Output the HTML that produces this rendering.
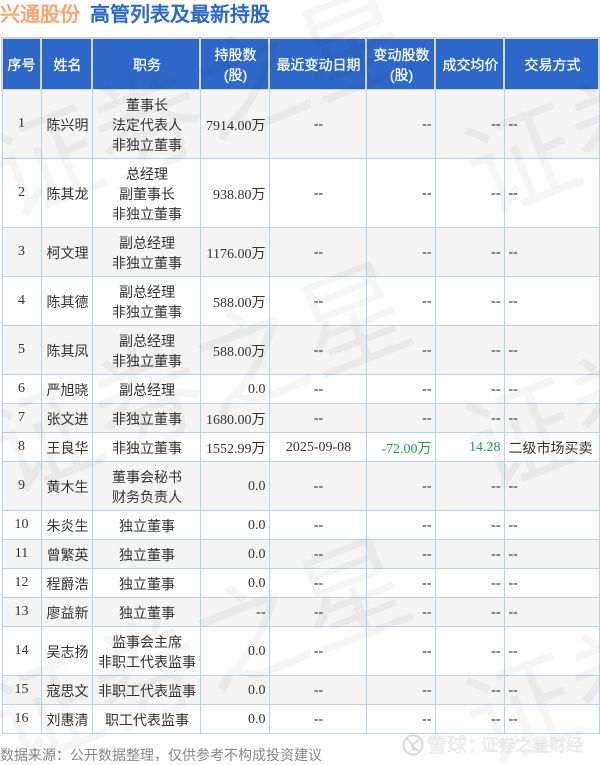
<!DOCTYPE html>
<html lang="zh"><head><meta charset="utf-8"><title>高管列表及最新持股</title>
<style>
html,body{margin:0;padding:0;background:#fff}
body{position:relative;width:600px;height:764px;overflow:hidden;font-family:"Liberation Serif","WenQuanYi Zen Hei",serif;color:#333}
.t{position:absolute;top:1px;font:bold 20px/28px "Liberation Sans","WenQuanYi Zen Hei",sans-serif}
table{position:absolute;left:1px;top:37px;border-collapse:collapse;table-layout:fixed;width:598px;font-size:14px;line-height:20px}
td{border:1px solid #b8d3ea;padding:6px 2px 0 4px;text-align:center;overflow:hidden;white-space:nowrap}
th{border:1px solid #d4d4d4;border-width:2px 2px 1px 2px;background:#2d68c8;color:#fff;font:14px/20px "Liberation Sans","WenQuanYi Zen Hei",sans-serif;padding:2px 0 0 2px;-webkit-text-stroke:.3px #fff}
th:first-child{padding-left:0}
tr.g td{background:#f4f4f4}
td.r{text-align:right;padding-right:3px;padding-left:0;padding-top:6px}
td.l{text-align:left;padding-left:4px;padding-top:6px}
td.r.up{padding-top:3px}
td:first-child{padding:0 3px}
td.m2{padding-top:7px}
td.m3{padding-top:6px}
td.d,td.r.d,td.l.d{padding-top:2px;color:#222}
td.gr{color:#1aa34a}
td.gu,td.r.gu{padding-top:2px}
.foot{position:absolute;left:0;top:745px;font:14px/20px "Liberation Sans","WenQuanYi Zen Hei",sans-serif;color:#888;white-space:nowrap}
svg.w{position:absolute;left:0;top:0;pointer-events:none}
</style></head><body>
<div class="t" style="left:0;color:#f9a572">兴通股份</div>
<div class="t" style="left:90px;color:#2d68c8">高管列表及最新持股</div>
<table>
<colgroup><col style="width:39px"><col style="width:51px"><col style="width:108px"><col style="width:69px"><col style="width:97px"><col style="width:69px"><col style="width:69px"><col style="width:95px"></colgroup>
<tr style="height:51px"><th>序号</th><th>姓名</th><th>职务</th><th>持股数<br>(股)</th><th>最近变动日期</th><th>变动股数<br>(股)</th><th>成交均价</th><th>交易方式</th></tr>
<tr class="g" style="height:69px"><td>1</td><td>陈兴明</td><td class="m3">董事长<br>法定代表人<br>非独立董事</td><td class="r">7914.00万</td><td class="d">--</td><td class="r d">--</td><td class="r d">--</td><td class="l d">--</td></tr>
<tr style="height:69px"><td>2</td><td>陈其龙</td><td class="m3">总经理<br>副董事长<br>非独立董事</td><td class="r">938.80万</td><td class="d">--</td><td class="r d">--</td><td class="r d">--</td><td class="l d">--</td></tr>
<tr class="g" style="height:49px"><td>3</td><td>柯文理</td><td class="m2">副总经理<br>非独立董事</td><td class="r">1176.00万</td><td class="d">--</td><td class="r d">--</td><td class="r d">--</td><td class="l d">--</td></tr>
<tr style="height:49px"><td>4</td><td>陈其德</td><td class="m2">副总经理<br>非独立董事</td><td class="r">588.00万</td><td class="d">--</td><td class="r d">--</td><td class="r d">--</td><td class="l d">--</td></tr>
<tr class="g" style="height:49px"><td>5</td><td>陈其凤</td><td class="m2">副总经理<br>非独立董事</td><td class="r">588.00万</td><td class="d">--</td><td class="r d">--</td><td class="r d">--</td><td class="l d">--</td></tr>
<tr style="height:29px"><td>6</td><td>严旭晓</td><td>副总经理</td><td class="r up">0.0</td><td class="d">--</td><td class="r d">--</td><td class="r d">--</td><td class="l d">--</td></tr>
<tr class="g" style="height:29px"><td>7</td><td>张文进</td><td>非独立董事</td><td class="r">1680.00万</td><td class="d">--</td><td class="r d">--</td><td class="r d">--</td><td class="l d">--</td></tr>
<tr style="height:29px"><td>8</td><td>王良华</td><td>非独立董事</td><td class="r">1552.99万</td><td class="gu">2025-09-08</td><td class="r gr">-72.00万</td><td class="r gr gu">14.28</td><td class="l">二级市场买卖</td></tr>
<tr class="g" style="height:49px"><td>9</td><td>黄木生</td><td class="m2">董事会秘书<br>财务负责人</td><td class="r up">0.0</td><td class="d">--</td><td class="r d">--</td><td class="r d">--</td><td class="l d">--</td></tr>
<tr style="height:29px"><td>10</td><td>朱炎生</td><td>独立董事</td><td class="r up">0.0</td><td class="d">--</td><td class="r d">--</td><td class="r d">--</td><td class="l d">--</td></tr>
<tr class="g" style="height:29px"><td>11</td><td>曾繁英</td><td>独立董事</td><td class="r up">0.0</td><td class="d">--</td><td class="r d">--</td><td class="r d">--</td><td class="l d">--</td></tr>
<tr style="height:29px"><td>12</td><td>程爵浩</td><td>独立董事</td><td class="r up">0.0</td><td class="d">--</td><td class="r d">--</td><td class="r d">--</td><td class="l d">--</td></tr>
<tr class="g" style="height:29px"><td>13</td><td>廖益新</td><td>独立董事</td><td class="r d">--</td><td class="d">--</td><td class="r d">--</td><td class="r d">--</td><td class="l d">--</td></tr>
<tr style="height:49px"><td>14</td><td>吴志扬</td><td class="m2">监事会主席<br>非职工代表监事</td><td class="r up">0.0</td><td class="d">--</td><td class="r d">--</td><td class="r d">--</td><td class="l d">--</td></tr>
<tr class="g" style="height:29px"><td>15</td><td>寇思文</td><td>非职工代表监事</td><td class="r up">0.0</td><td class="d">--</td><td class="r d">--</td><td class="r d">--</td><td class="l d">--</td></tr>
<tr style="height:29px"><td>16</td><td>刘惠清</td><td>职工代表监事</td><td class="r up">0.0</td><td class="d">--</td><td class="r d">--</td><td class="r d">--</td><td class="l d">--</td></tr>
</table>
<div class="foot">数据来源：公开数据整理，仅供参考不构成投资建议</div>
<svg class="w" width="600" height="764" viewBox="0 0 600 764">
<g font-family="'WenQuanYi Zen Hei','Noto Sans CJK SC',sans-serif" font-size="110" fill="#000" fill-opacity=".04">
<text transform="translate(8 219) rotate(-21)">证券之星</text>
<text transform="translate(485 217) rotate(-21)">证券之星</text>
<text transform="translate(8 494) rotate(-21)">证券之星</text>
<text transform="translate(485 492) rotate(-21)">证券之星</text>
<text transform="translate(8 769) rotate(-21)">证券之星</text>
<text transform="translate(485 767) rotate(-21)">证券之星</text>
</g>
<g fill="none" stroke="#d8d8d8" stroke-width="2">
<circle cx="413" cy="745" r="9.5"/>
<path d="M407 739c4 3 6.500 7 6.500 12M419 740c-3 1.500-5 3.500-6.500 6l6 5"/>
</g>
<g font-family="'WenQuanYi Zen Hei',sans-serif" fill="#f6f6f6" stroke="#dadada" stroke-width=".4">
<text x="427" y="752" font-size="20">雪球</text>
<text x="467" y="752" font-size="20">：</text>
<text x="481" y="751" font-size="17">证券之星财经</text>
</g>
</svg>
</body></html>
